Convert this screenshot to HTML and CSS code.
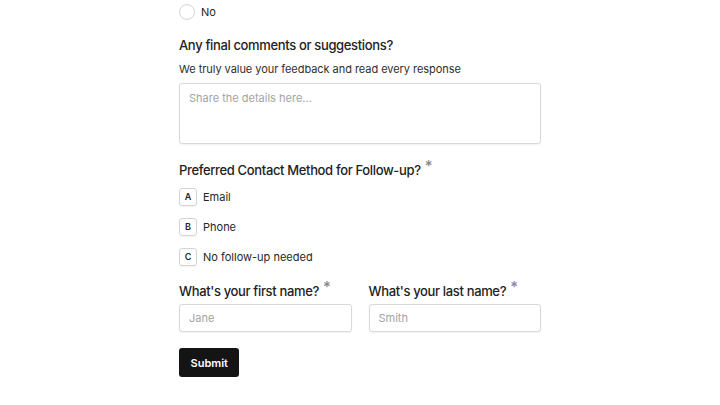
FILE: index.html
```html
<!DOCTYPE html>
<html lang="en">
<head>
    <meta charset="UTF-8">
    <meta name="viewport" content="width=device-width, initial-scale=1.0">
    <title>Feedback</title>
    <link rel="stylesheet" href="styles.css">
</head>
<body>
    <form class="survey">
        <label class="radio-row">
            <span class="radio-dot"></span>
            <span>No</span>
        </label>

        <div class="question">
            <h3 class="question-title">Any final comments or suggestions?</h3>
            <p class="question-help">We truly value your feedback and read every response</p>
            <textarea class="text-box" placeholder="Share the details here..."></textarea>
        </div>

        <div class="question">
            <h3 class="question-title">Preferred Contact Method for Follow-up? <span class="req">*</span></h3>
            <div class="choices">
                <label class="choice"><span class="choice-key">A</span>Email</label>
                <label class="choice"><span class="choice-key">B</span>Phone</label>
                <label class="choice"><span class="choice-key">C</span>No follow-up needed</label>
            </div>
        </div>

        <div class="name-row">
            <div class="name-field">
                <h3 class="question-title">What's your first name? <span class="req">*</span></h3>
                <input class="text-input" type="text" placeholder="Jane">
            </div>
            <div class="name-field">
                <h3 class="question-title">What's your last name? <span class="req">*</span></h3>
                <input class="text-input" type="text" placeholder="Smith">
            </div>
        </div>

        <button type="submit" class="submit-btn">Submit</button>
    </form>
</body>
</html>
```

FILE: styles.css
```css
* {
    box-sizing: border-box;
}

body {
    margin: 0;
    background: #fff;
    font-family: Inter, "Noto Sans", sans-serif;
    color: #262626;
}

.survey {
    width: 362px;
    margin: 0 auto;
    padding-top: 4px;
    display: flex;
    flex-direction: column;
}

.radio-row {
    display: flex;
    align-items: center;
    gap: 6px;
    height: 16px;
    font-size: 11px;
}

.radio-dot {
    width: 16px; height: 16px;
    border: 1px solid #d4d4d4;
    border-radius: 50%;
}

.question {
    margin-top: 15px;
    display: flex;
    flex-direction: column;
}

.question + .question {
    margin-top: 16px;
}

.question-title {
    margin: 0;
    font-size: 13px;
    font-weight: 500;
    letter-spacing: -0.35px;
    line-height: 20px;
    color: #222;
}

.req {
    color: #8a8a8a;
    font-size: 15px;
    position: relative;
    top: -4px;
    margin-left: 1px;
}

.question-help {
    margin: 6px 0 0;
    font-size: 11px;
    letter-spacing: -0.05px;
    line-height: 16px;
    color: #2e2e2e;
}

.text-box {
    margin-top: 6px;
    height: 61px;
    resize: none;
    border: 1px solid #d9d9d9;
    border-radius: 3px;
    padding: 7px 9px;
    font-family: inherit;
    font-size: 11px;
    box-shadow: 0 1px 2px rgba(0, 0, 0, .06);
}

.text-box::placeholder,
.text-input::placeholder {
    color: #a3a3a3;
}

.choices {
    margin-top: 7px;
    display: flex;
    flex-direction: column;
    gap: 11px;
}

.choice {
    display: flex;
    align-items: center;
    gap: 6px;
    height: 19px;
    font-size: 11px;
    color: #262626;
}

.choice-key {
    width: 18px; height: 18px;
    display: flex;
    align-items: center;
    justify-content: center;
    border: 1px solid #d4d4d4;
    border-radius: 3px;
    font-size: 9px;
    font-weight: 600;
    box-shadow: 0 1px 2px rgba(0, 0, 0, .06);
}

.name-row {
    margin-top: 15px;
    display: flex;
    gap: 17px;
}

.name-field {
    flex: 1;
    min-width: 0;
    display: flex;
    flex-direction: column;
    gap: 3px;
}

.text-input {
    width: 100%;
    height: 28px;
    border: 1px solid #d9d9d9;
    border-radius: 3px;
    padding: 0 9px;
    font-family: inherit;
    font-size: 11px;
    box-shadow: 0 1px 2px rgba(0, 0, 0, .06);
}

.submit-btn {
    margin-top: 16px;
    align-self: flex-start;
    height: 29px;
    padding: 0 11.5px;
    background: #141414;
    color: #fff;
    border: none;
    border-radius: 3px;
    font-family: inherit;
    font-size: 11px;
    font-weight: 600;
}
```
